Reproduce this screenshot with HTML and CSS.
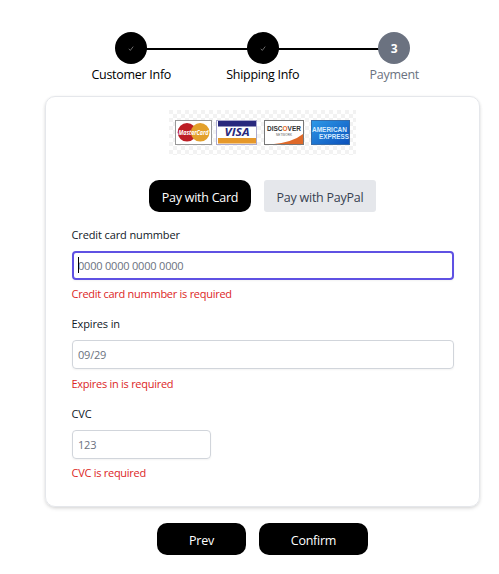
FILE: index.html
```html
<!DOCTYPE html>
<html lang="en">
<head>
<meta charset="utf-8">
<title>Payment</title>
<link rel="stylesheet" href="styles.css">
</head>
<body>
<main class="checkout">
  <ol class="steps">
    <li class="step done"><span class="dot"><svg width="6" height="7" viewBox="0 0 6 7"><path d="M.8 3.8 2.3 5.4 5.2 1.6"/></svg></span><span class="step-label">Customer Info</span></li>
    <li class="step done"><span class="dot"><svg width="6" height="7" viewBox="0 0 6 7"><path d="M.8 3.8 2.3 5.4 5.2 1.6"/></svg></span><span class="step-label">Shipping Info</span></li>
    <li class="step current"><span class="dot">3</span><span class="step-label">Payment</span></li>
  </ol>
  <section class="card">
    <svg class="brands" width="187" height="45" viewBox="0 0 187 45">
      <defs>
        <pattern id="checks" width="8" height="8" patternUnits="userSpaceOnUse"><path fill="#f2f2f2" d="M0 0h4v4H0zM4 4h4v4H4z"/></pattern>
        <linearGradient id="blue" x1="0" y1="0" x2="1" y2="1"><stop offset="0" stop-color="#2d9ae8"/><stop offset="1" stop-color="#0c50bb"/></linearGradient>
      </defs>
      <rect width="187" height="45" fill="#fff"/>
      <rect width="187" height="45" fill="url(#checks)"/>
      <g>
        <rect x="6.5" y="10.5" width="36" height="24" fill="#fff" stroke="#999"/>
        <circle cx="18" cy="22.3" r="9.3" fill="#bd1e25"/><circle cx="31.2" cy="22.3" r="9.3" fill="#e3a02b"/>
        <text x="9.5" y="25" class="mc" textLength="30" lengthAdjust="spacingAndGlyphs">MasterCard</text>
      </g>
      <g>
        <rect x="47.5" y="10.5" width="40" height="24" fill="#fff" stroke="#aaa9cd"/>
        <path fill="#28287d" d="M49 11h38v5.5H49z"/><path fill="#e6982a" d="M49 28h38v5.5H49z"/>
        <text x="55.5" y="26.4" class="visa" textLength="25" lengthAdjust="spacingAndGlyphs">VISA</text>
      </g>
      <g>
        <rect x="95.5" y="10.5" width="39" height="24" fill="#fff" stroke="#777"/>
        <path fill="#df6929" d="M134 24v10h-29q19-2 29-10z"/>
        <text x="98" y="21.3" class="discover" textLength="34" lengthAdjust="spacingAndGlyphs">DISC<tspan fill="#e66b28">O</tspan>VER</text>
        <text x="107" y="26.2" class="network" textLength="16">NETWORK</text>
      </g>
      <g>
        <rect x="142.5" y="10.5" width="38" height="24" fill="url(#blue)" stroke="#376ca8"/>
        <text x="143" y="21.5" class="amex" textLength="35" lengthAdjust="spacingAndGlyphs">AMERICAN</text>
        <text x="150" y="29" class="amex" textLength="30" lengthAdjust="spacingAndGlyphs">EXPRESS</text>
      </g>
    </svg>
    <div class="methods">
      <button class="btn pay-card" type="button">Pay with Card</button>
      <button class="btn paypal" type="button">Pay with PayPal</button>
    </div>
    <form class="fields">
      <div class="field">
        <label>Credit card nummber</label>
        <div class="input focused"><i class="caret"></i><span>0000 0000 0000 0000</span></div>
        <p class="error">Credit card nummber is required</p>
      </div>
      <div class="field">
        <label>Expires in</label>
        <div class="input"><span>09/29</span></div>
        <p class="error">Expires in is required</p>
      </div>
      <div class="field">
        <label>CVC</label>
        <div class="input short"><span>123</span></div>
        <p class="error">CVC is required</p>
      </div>
    </form>
  </section>
  <div class="actions">
    <button class="btn prev" type="button">Prev</button>
    <button class="btn confirm" type="button">Confirm</button>
  </div>
</main>
</body>
</html>
```
FILE: styles.css
```css
* { box-sizing: border-box; }
body {
  margin: 0;
  background: #fff;
  color: #000;
  font-family: "Open Sans", "Noto Sans", sans-serif;
}
.checkout { width: 435px; margin: 32px 0 0 45px; }
.steps {
  display: grid;
  grid-template-columns: repeat(3, 131.5px);
  margin: 0 0 0 20.5px;
  padding: 0;
  list-style: none;
  height: 64px;
}
.step { position: relative; display: flex; flex-direction: column; align-items: center; }
.step + .step::before {
  content: "";
  position: absolute;
  top: 15.5px;
  left: -50%;
  width: 100%;
  height: 2px;
  background: #000;
}
.dot {
  position: relative;
  z-index: 1;
  width: 32px;
  height: 32px;
  border-radius: 50%;
  background: #000;
  display: flex;
  align-items: center;
  justify-content: center;
  color: #fff;
  font-size: 12px;
  font-weight: 700;
}
.dot svg { fill: none; stroke: #999; stroke-width: .7; }
.current .dot { background: #6b7280; }
.step-label {
  margin-top: 1px;
  font-size: 12.5px;
  line-height: 20px;
  letter-spacing: -.28px;
  white-space: nowrap;
}
.current .step-label { color: #6b7280; }
.card {
  height: 411px;
  padding: 13px 25px 0 26px;
  border: 1px solid #e5e7eb;
  border-radius: 10px;
  box-shadow: 0 1px 3px rgba(0, 0, 0, .1), 0 2px 4px rgba(0, 0, 0, .07);
}
.brands { display: block; margin-left: 97px; }
.mc { font: italic 700 7px "Open Sans", sans-serif; fill: #fff; }
.visa { font: italic 700 11px "Open Sans", sans-serif; fill: #28287d; }
.discover { font: 700 7px "Liberation Sans", sans-serif; fill: #333; }
.network { font: 3px "Liberation Sans", sans-serif; fill: #555; }
.amex { font: 700 7.5px "Liberation Sans", sans-serif; fill: #d8edff; }
.methods { display: flex; gap: 13px; margin: 25px 0 0 77px; }
.btn {
  height: 32px;
  padding: 2px 0 0;
  border: 0;
  border-radius: 10px;
  background: #000;
  color: #fff;
  font: 12.5px "Open Sans", sans-serif;
  letter-spacing: -.25px;
  white-space: nowrap;
}
.pay-card { width: 102px; }
.paypal { width: 112px; border-radius: 3px; background: #e5e7eb; color: #374151; }
.fields { margin-top: 13px; }
.field { height: 89.5px; }
.field label {
  display: block;
  margin-left: -.5px;
  font-size: 11px;
  line-height: 20px;
  letter-spacing: -.12px;
  color: #111827;
}
.field:nth-child(n+2) label { position: relative; top: -.5px; }
.input {
  position: relative;
  height: 29px;
  margin-top: 5.5px;
  padding-left: 5px;
  border: 1px solid #d1d5db;
  border-radius: 4px;
  box-shadow: 0 1px 2px rgba(0, 0, 0, .05);
  color: #6b7280;
  font-size: 11px;
  line-height: 27px;
  letter-spacing: -.2px;
}
.focused { border: 2px solid #5f51e3; padding-left: 4px; line-height: 25px; }
.short { width: 139px; }
.caret { position: absolute; left: 4px; top: 4px; width: 1px; height: 16px; background: #000; }
.error {
  margin: 4.5px 0 0 -.5px;
  font-size: 11px;
  line-height: 20px;
  letter-spacing: -.27px;
  color: #dc2626;
}
.actions { display: flex; gap: 13px; margin: 16px 0 0 112px; }
.prev { width: 89px; }
.confirm { width: 109px; }
```
